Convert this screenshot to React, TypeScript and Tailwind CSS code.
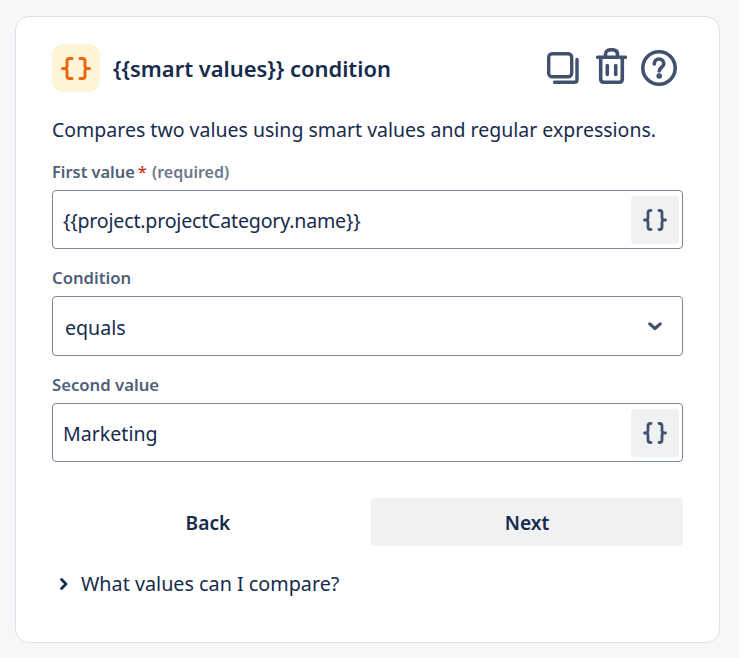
const font = { fontFamily: '"Noto Sans", sans-serif' };

function BracesLarge() {
  return (
    <svg viewBox="0 0 30 23" className="w-[30px] h-[23px]" fill="none" stroke="currentColor" strokeWidth="3" strokeLinecap="round" strokeLinejoin="round">
      <path d="M11 1.5H8.5C7 1.5 6 2.5 6 4V9C6 10.5 5 11.5 3.5 11.5H1.5M3.5 11.5C5 11.5 6 12.5 6 14V19C6 20.5 7 21.5 8.5 21.5H11" />
      <path d="M19 1.5H21.5C23 1.5 24 2.5 24 4V9C24 10.5 25 11.5 26.5 11.5H28.5M26.5 11.5C25 11.5 24 12.5 24 14V19C24 20.5 23 21.5 21.5 21.5H19" />
    </svg>
  );
}

function BracesSmall() {
  return (
    <svg viewBox="0 0 24 22" className="w-[24px] h-[22px]" fill="none" stroke="currentColor" strokeWidth="2.8" strokeLinecap="round" strokeLinejoin="round">
      <path d="M8 1.5H7.5C6 1.5 5 2.5 5 4V8.5C5 10 4.2 11 2.8 11H1.5M2.8 11C4.2 11 5 12 5 13.5V18C5 19.5 6 20.5 7.5 20.5H8" />
      <path d="M16 1.5H16.5C18 1.5 19 2.5 19 4V8.5C19 10 19.8 11 21.2 11H22.5M21.2 11C19.8 11 19 12 19 13.5V18C19 19.5 18 20.5 16.5 20.5H16" />
    </svg>
  );
}

function Label({ children }: { children: React.ReactNode }) {
  return <div className="h-[18px] flex items-center text-[16.7px] font-semibold text-[#505f79] leading-[18px]">{children}</div>;
}

function SmartInput({ value, tight }: { value: string; tight?: boolean }) {
  return (
    <div className="mt-[9px] h-[59px] rounded-[4px] border border-[#7a869a] bg-white flex items-center justify-between pl-[10px] pr-[3px] text-[19.6px] text-[#172b4d]">
      <span className={tight ? "pt-[3px] tracking-[-0.2px]" : "pt-[3px]"}>{value}</span>
      <span className="w-[48px] h-[48px] rounded-[4px] bg-[#f0f1f3] flex items-center justify-center text-[#42526e]">
        <BracesSmall />
      </span>
    </div>
  );
}

export default function App() {
  return (
    <div style={font} className="w-[739px] h-[658px] bg-[#f6f7f9] pt-[16px] pl-[15px]">
      <div className="w-[705px] h-[627px] bg-white border border-[#dfe1e6] rounded-[14px] pl-[36px] pr-[36px] pt-[27px] flex flex-col">
        <div className="flex items-center h-[48px]">
          <div className="w-[48px] h-[48px] rounded-[12px] bg-[#fff4d6] flex items-center justify-center text-[#e8680f]">
            <BracesLarge />
          </div>
          <div className="ml-[13px] pt-[2px] text-[21.9px] font-semibold text-[#172b4d]">{"{{smart values}} condition"}</div>
          <div className="ml-auto mr-[6px] flex items-center text-[#42526e]">
            <svg viewBox="0 0 32 32" className="w-[32px] h-[32px]" fill="none" stroke="currentColor" strokeWidth="3.4" strokeLinecap="round" strokeLinejoin="round">
              <rect x="1.7" y="1.7" width="23" height="23" rx="3.5" />
              <path d="M30 7.5V28C30 29.5 29 30.3 27.5 30.3H7.5" />
            </svg>
            <svg viewBox="0 0 31 36" className="ml-[17px] mb-[4px] w-[31px] h-[36px]" fill="none" stroke="currentColor" strokeWidth="3.6" strokeLinecap="round" strokeLinejoin="round">
              <path d="M1.7 9.2H29.3M9.5 9V6C9.5 3.2 12 1.7 15.5 1.7S21.5 3.2 21.5 6V9M4.7 9.5V31C4.7 33 5.8 34.2 7.7 34.2H23.3C25.2 34.2 26.3 33 26.3 31V9.5M11.3 17.5V26.5M19.7 17.5V26.5" />
            </svg>
            <svg viewBox="0 0 36 36" className="ml-[14px] w-[36px] h-[36px]" fill="none" stroke="currentColor" strokeWidth="3.6" strokeLinecap="round" strokeLinejoin="round">
              <circle cx="18" cy="18" r="16.2" />
              <path d="M13.3 14C13.3 11 15.5 9 18 9S22.8 11 22.8 13.8C22.8 17.5 18.2 17.5 18.2 21" />
              <circle cx="18.2" cy="26" r="1" fill="currentColor" />
            </svg>
          </div>
        </div>
        <p className="mt-[24px] text-[19.5px] leading-[28px] text-[#172b4d] whitespace-nowrap">Compares two values using smart values and regular expressions.</p>
        <div className="mt-[19px]">
          <Label>
            <span className="text-[16.4px]">First value</span>
            <span className="ml-[3px] text-[#bf2600] font-normal">*</span>
            <span className="ml-[5px] text-[16px] text-[#6b778c]">(required)</span>
          </Label>
          <SmartInput value="{{project.projectCategory.name}}" tight />
        </div>
        <div className="mt-[20px]">
          <Label>Condition</Label>
          <div className="mt-[9px] h-[60px] rounded-[4px] border border-[#7a869a] bg-white flex items-center justify-between pl-[12px] pr-[17px] text-[19.6px] text-[#172b4d]">
            <span className="pt-[3px]">equals</span>
            <svg viewBox="0 0 16 16" className="w-[20px] h-[20px] text-[#42526e]" fill="none" stroke="currentColor" strokeWidth="2.6" strokeLinecap="round" strokeLinejoin="round">
              <path d="M3.8 6.3L8 10L12.2 6.3" />
            </svg>
          </div>
        </div>
        <div className="mt-[20px]">
          <Label>Second value</Label>
          <SmartInput value="Marketing" />
        </div>
        <div className="mt-[36px] flex gap-[7px]">
          <button className="flex-1 h-[48px] pt-[3px] rounded-[4px] text-[19.2px] font-semibold text-[#172b4d]">Back</button>
          <button className="flex-1 h-[48px] pt-[3px] rounded-[4px] bg-[#f0f1f3] text-[19.2px] font-semibold text-[#172b4d]">Next</button>
        </div>
        <div className="mt-[23px] flex items-center text-[19.75px] text-[#172b4d]">
          <svg viewBox="0 0 16 16" className="w-[16px] h-[16px] ml-[4px] mr-[9px]" fill="none" stroke="currentColor" strokeWidth="2.8" strokeLinecap="round" strokeLinejoin="round">
            <path d="M5.5 3.5L10 8L5.5 12.5" />
          </svg>
          What values can I compare?
        </div>
      </div>
    </div>
  );
}
